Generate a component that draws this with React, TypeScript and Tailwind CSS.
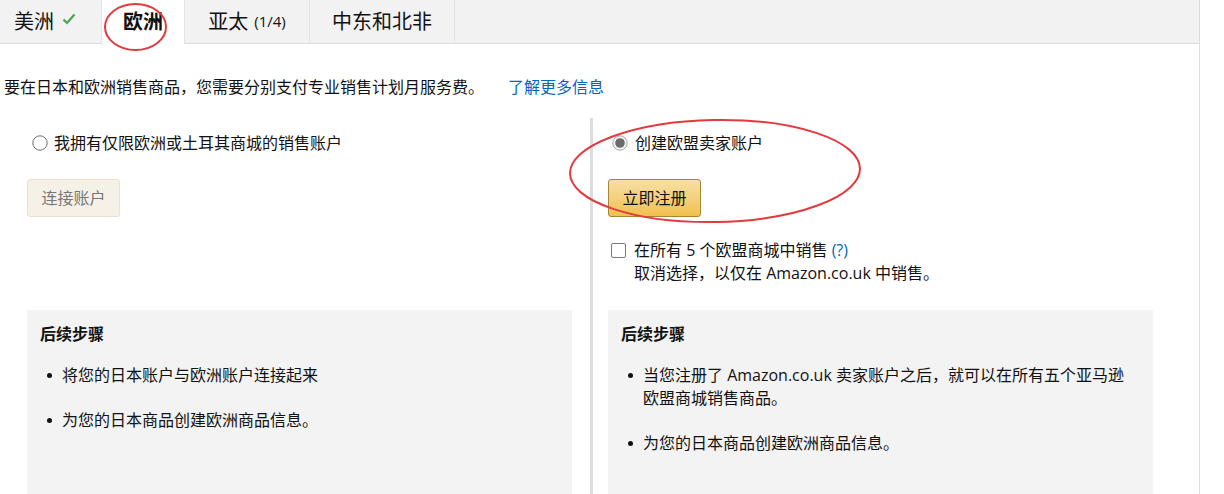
import React from "react";

function CheckMark() {
  return (
    <svg width="14" height="12" viewBox="0 0 14 12" className="ml-[8px] -mt-[6px]">
      <polyline points="1.5,6.5 5,10 12.5,1.5" fill="none" stroke="#4ba54b" strokeWidth="2.2" />
    </svg>
  );
}

function Radio({ checked = false }: { checked?: boolean }) {
  return (
    <svg width="16" height="16" viewBox="0 0 16 16" className="shrink-0">
      <circle cx="8" cy="8" r="7.2" fill={checked ? "#f4f4f4" : "#fff"} stroke={checked ? "#a6a6a6" : "#6f6f6f"} strokeWidth="1" />
      {checked && <circle cx="8" cy="8" r="4.8" fill="#6c6c6c" />}
    </svg>
  );
}

interface StepsProps {
  items: string[];
}

function NextSteps({ items }: StepsProps) {
  return (
    <div className="min-h-[184px] w-[545px] bg-[#f3f3f3] px-[13px] pt-[13px] pb-[20px]">
      <p className="text-[16px] font-bold leading-[23px]">后续步骤</p>
      <ul className="mt-[18px] flex flex-col gap-[22px]">
        {items.map((text, i) => (
          <li key={i} className="flex text-[16px] leading-[23px]">
            <span className="w-[22px] shrink-0 pl-[7px] pt-[9px]">
              <span className="block h-[5px] w-[5px] rounded-full bg-[#111]" />
            </span>
            <span className="max-w-[486px]">{text}</span>
          </li>
        ))}
      </ul>
    </div>
  );
}

export default function App() {
  return (
    <div className="relative h-[494px] overflow-hidden bg-white text-[#111] font-['Open_Sans','Noto_Sans_CJK_SC',sans-serif]">
      <div className="h-[494px] w-[1200px] border-r border-[#dddddd]">
        {/* tabs */}
        <div className="flex h-[44px] border-b border-[#dcdcdc] bg-[#f2f2f2]">
          <div className="flex w-[101px] items-center pl-[14px] text-[20px]">
            <span>美洲</span>
            <CheckMark />
          </div>
          <div className="flex h-[44px] w-[84px] items-center justify-center border-x border-[#e4e4e4] bg-white text-[20px] font-bold">
            欧洲
          </div>
          <div className="flex w-[125px] items-center justify-center border-r border-[#e4e4e4] text-[20px]">
            亚太<span className="ml-[6px] text-[15px]">(1/4)</span>
          </div>
          <div className="flex w-[145px] items-center justify-center border-r border-[#e4e4e4] text-[20px]">
            中东和北非
          </div>
        </div>

        <p className="mt-[32px] pl-[4px] text-[16px] leading-[23px]">
          要在日本和欧洲销售商品，您需要分别支付专业销售计划月服务费。
          <a className="ml-[24px] text-[#0066c0]">了解更多信息</a>
        </p>

        <div className="mt-[19px] flex">
          {/* left column */}
          <div className="w-[590px] pl-[27px]">
            <div className="h-[192px] pt-[15px]">
              <div className="flex h-[20px] items-center gap-[6px] pl-[5px] text-[16px]">
                <Radio />
                <span>我拥有仅限欧洲或土耳其商城的销售账户</span>
              </div>
              <button className="mt-[26px] h-[38px] w-[93px] rounded-[3px] border border-[#e9e2d3] bg-[#f6f1e6] text-[16px] text-[#777]">
                连接账户
              </button>
            </div>
            <NextSteps items={["将您的日本账户与欧洲账户连接起来", "为您的日本商品创建欧洲商品信息。"]} />
          </div>

          <div className="w-[3px] shrink-0 bg-[#dddddd]" />

          {/* right column */}
          <div className="pl-[15px]">
            <div className="h-[192px] pt-[15px]">
              <div className="flex h-[20px] items-center gap-[7px] pl-[4px] text-[16px]">
                <Radio checked />
                <span>创建欧盟卖家账户</span>
              </div>
              <button className="mt-[26px] h-[38px] w-[93px] rounded-[3px] border border-[#a88734] bg-gradient-to-b from-[#f7dfa5] to-[#f0c14b] text-[16px] text-[#111]">
                立即注册
              </button>
              <div className="mt-[22px] flex items-start gap-[8px] pl-[3px] text-[16px] leading-[23px]">
                <span className="mt-[4px] h-[15px] w-[15px] shrink-0 rounded-[2px] border border-[#7a7a7a] bg-white" />
                <div>
                  <p>
                    在所有 5 个欧盟商城中销售 <a className="text-[#0066c0]">(?)</a>
                  </p>
                  <p>取消选择，以仅在 Amazon.co.uk 中销售。</p>
                </div>
              </div>
            </div>
            <NextSteps
              items={[
                "当您注册了 Amazon.co.uk 卖家账户之后，就可以在所有五个亚马逊欧盟商城销售商品。",
                "为您的日本商品创建欧洲商品信息。",
              ]}
            />
          </div>
        </div>
      </div>

      {/* hand-drawn red annotations */}
      <svg className="pointer-events-none absolute left-0 top-0" width="1224" height="494">
        <ellipse cx="135.5" cy="27" rx="30.5" ry="23" fill="none" stroke="#e23b3f" strokeWidth="2" />
        <ellipse cx="715" cy="171" rx="145" ry="51" fill="none" stroke="#e23b3f" strokeWidth="2" transform="rotate(-1 715 171)" />
      </svg>
    </div>
  );
}
